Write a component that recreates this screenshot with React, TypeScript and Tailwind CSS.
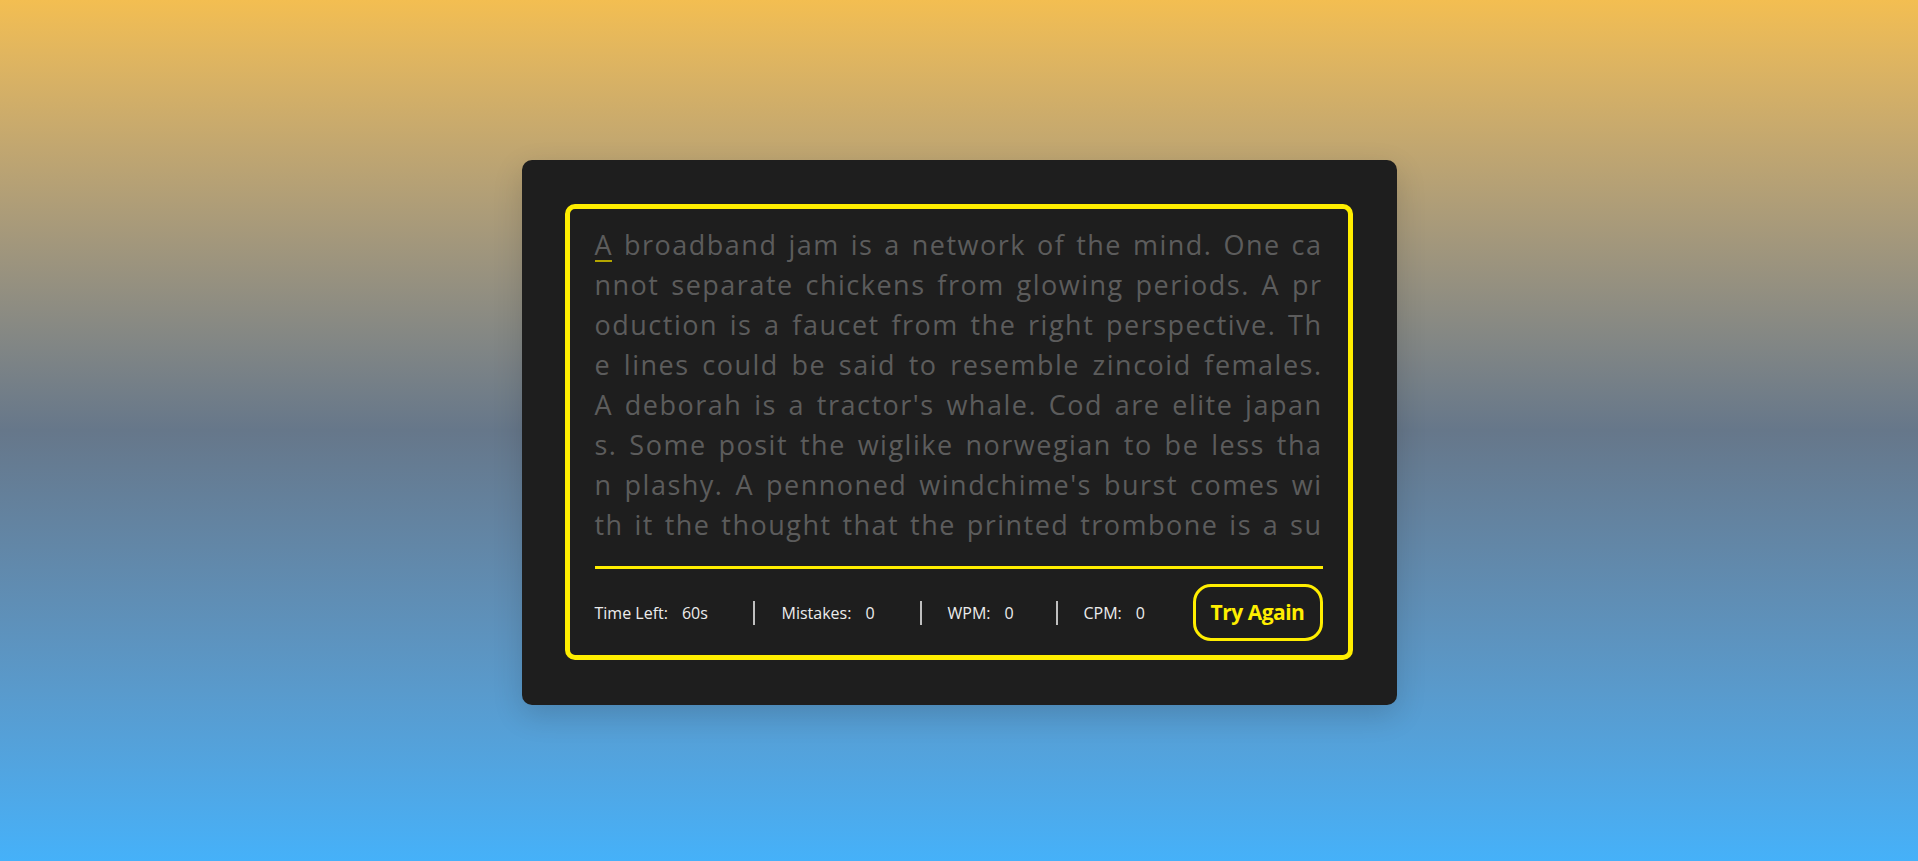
import React from "react";

const lines = [
  "broadband jam is a network of the mind. One ca",
  "nnot separate chickens from glowing periods. A pr",
  "oduction is a faucet from the right perspective. Th",
  "e lines could be said to resemble zincoid females.",
  "A deborah is a tractor's whale. Cod are elite japan",
  "s. Some posit the wiglike norwegian to be less tha",
  "n plashy. A pennoned windchime's burst comes wi",
  "th it the thought that the printed trombone is a su",
];

const stats = [
  { label: "Time Left:", value: "60s", cls: "w-[158px]" },
  { label: "Mistakes:", value: "0", cls: "w-[167px] border-l-2 border-[#bfbfbf] pl-[27px]" },
  { label: "WPM:", value: "0", cls: "w-[136px] border-l-2 border-[#bfbfbf] pl-[26px]" },
  { label: "CPM:", value: "0", cls: "border-l-2 border-[#bfbfbf] pl-[26px]" },
];

export default function App() {
  return (
    <div className="min-h-screen w-full flex items-center justify-center pt-[4px] bg-linear-to-b from-[#f3be51] via-[#66778a] to-[#45b1f9] font-['Open_Sans','Noto_Sans',sans-serif]">
      <div className="w-[875px] rounded-[10px] bg-[#1e1e1e] pl-[43px] pr-[44px] pt-[44px] pb-[45px] shadow-[0_10px_30px_rgba(0,0,0,0.15)]">
        <div className="rounded-[10px] border-[5px] border-[#ffee00] px-[25px] pb-[14px] pt-[16px]">
          {/* TYPING TEXT */}
          <div className="text-[27px] leading-[40px] tracking-[1.5px] text-[#5c5c5c]">
            {lines.map((line, i) => (
              <div key={i} className="text-justify [text-align-last:justify]">
                {i === 0 && (
                  <>
                    <span className="relative">
                      A
                      <span className="absolute left-0 right-[1px] bottom-[1px] h-[2px] bg-[#b3a500]" />
                    </span>{" "}
                  </>
                )}
                {line}
              </div>
            ))}
          </div>

          <div className="mt-[21px] h-[3px] bg-[#ffee00]" />

          {/* RESULTS */}
          <div className="flex items-center justify-between pt-[15px]">
            <ul className="flex items-center">
              {stats.map((s) => (
                <li key={s.label} className={`flex h-[24px] items-center gap-[14px] text-[16px] font-medium text-[#ececec] ${s.cls}`}>
                  <span>{s.label}</span>
                  <span>{s.value}</span>
                </li>
              ))}
            </ul>
            <button className="h-[57px] w-[130px] rounded-[18px] border-[3px] border-[#ffee00] text-[21px] font-bold tracking-[-0.5px] text-[#ffee00]">
              Try Again
            </button>
          </div>
        </div>
      </div>
    </div>
  );
}
